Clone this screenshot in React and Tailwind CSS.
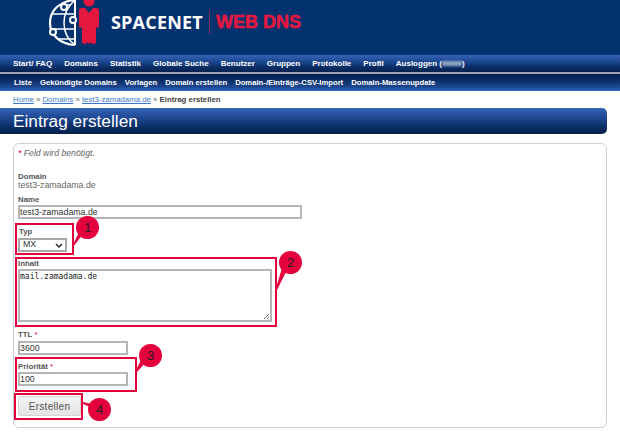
const nav1 = ["Start/ FAQ", "Domains", "Statistik", "Globale Suche", "Benutzer", "Gruppen", "Protokolle", "Profil"];
const nav2 = ["Liste", "Gekündigte Domains", "Vorlagen", "Domain erstellen", "Domain-/Einträge-CSV-Import", "Domain-Massenupdate"];
const barGrad = "bg-[linear-gradient(to_bottom,#3563b5_0%,#1f4a94_35%,#0b2f68_70%,#04204c_100%)]";

function Logo() {
  return (
    <svg width="60" height="48" viewBox="0 0 60 48" className="block" fill="none">
      <g stroke="#fff" strokeWidth="1.5">
        <path d="M35 1 C20 2 10 11 10 24 C10 36 20 45 35 46" strokeWidth="2.2" />
        <path d="M35 1 C27 8 24 16 24 24 C24 33 27 40 35 46" />
        <path d="M12 15 H35 M11 30 H35 M19 6 H31 M18 40 H35" />
        <path d="M35 1 V46" strokeWidth="2" />
        <circle cx="24" cy="8" r="3" fill="#03326f" strokeWidth="2" />
        <circle cx="33" cy="21" r="3" fill="#03326f" strokeWidth="2" />
        <circle cx="13" cy="33" r="3" fill="#03326f" strokeWidth="2" />
      </g>
      <g fill="#e5173f">
        <circle cx="49" cy="2" r="5.5" />
        <path d="M42 9 h3 l4 5 l4 -5 h3 a3 3 0 0 1 3 3 v15 a1.5 1.5 0 0 1 -3 0.5 v15 a2.5 2.5 0 0 1 -5 0 a2 2 0 0 1 -4 0 a2.5 2.5 0 0 1 -5 0 v-15 a1.5 1.5 0 0 1 -3 -0.5 v-15 a3 3 0 0 1 3 -3z" />
      </g>
    </svg>
  );
}

function Badge({ n, className, tail }) {
  return (
    <>
      <svg className="absolute left-0 top-0 pointer-events-none" width="620" height="435">
        <polygon points={tail} fill="#e4003c" />
      </svg>
      <div className={`absolute w-[23px] h-[23px] rounded-full bg-[#e4003c] flex items-center justify-center text-[13px] text-[#222] ${className}`}>{n}</div>
    </>
  );
}

function Label({ children, req }) {
  return (
    <div className="text-[7.8px] leading-[9px] font-bold text-[#555]">
      {children}
      {req && <span className="text-[#e4003c] font-normal"> *</span>}
    </div>
  );
}

const inputCls = "block border-2 border-[#b5b5b5] bg-white text-[8.8px] leading-[10px] text-[#333] px-0 outline-none";

export default function App() {
  return (
    <div className="relative w-[620px] h-[435px] overflow-hidden bg-white font-['Liberation_Sans',Arial,sans-serif]">
      <header className="h-[55px] bg-[#03326f] flex items-start pl-[40px] overflow-hidden">
        <div className="-mt-[1px]"><Logo /></div>
        <div className="flex items-center h-[43px] ml-[11px]">
          <span className="text-white text-[18px] font-bold tracking-[0.2px] font-['Open_Sans',sans-serif] leading-none">SPACENET</span>
          <span className="w-px h-[24px] bg-[#7a2d55] mx-[6px]" />
          <span className="text-[#e5173f] text-[18px] font-bold leading-none [-webkit-text-stroke:0.5px_#e5173f]">WEB DNS</span>
        </div>
      </header>

      <nav className={`h-[17px] ${barGrad} flex items-center pl-[13px] gap-[12px] text-white text-[8px] font-bold`}>
        {nav1.map((t) => <span key={t}>{t}</span>)}
        <span className="flex items-center">Ausloggen (<span className="inline-block w-[20px] h-[5px] bg-[#8fa3c4] blur-[1px]" />)</span>
      </nav>
      <div className="h-[2px] bg-[#9aa7b8]" />
      <nav className="h-[17px] bg-[linear-gradient(to_bottom,#04204c_0%,#0b2f68_40%,#1f4a94_80%,#2f66c4_100%)] flex items-center pl-[14px] gap-[8px] text-white text-[7.7px] font-bold">
        {nav2.map((t) => <span key={t}>{t}</span>)}
      </nav>

      <div className="h-[17px] pl-[13px] flex items-center text-[7.8px] text-[#666] whitespace-pre">
        <span className="text-[#3a78c9] underline">Home</span> » <span className="text-[#3a78c9] underline">Domains</span> » <span className="text-[#3a78c9] underline">test3-zamadama.de</span> » <span className="font-bold text-[#444]">Eintrag erstellen</span>
      </div>

      <div className={`h-[26px] w-[607px] rounded-r-[5px] ${barGrad} flex items-center pl-[13px] pt-[1px] text-white text-[17.3px]`}>Eintrag erstellen</div>

      <main className="ml-[13px] mt-[9px] w-[594px] h-[285px] border border-[#cfcfcf] rounded-[6px] pl-[4px] pt-[4px]">
        <p className="text-[8.7px] leading-[11px] italic text-[#666]"><span className="text-[#e4003c]">*</span> Feld wird benötigt.</p>

        <div className="mt-[13px]"><Label>Domain</Label></div>
        <div className="text-[8.8px] leading-[9px] text-[#666]">test3-zamadama.de</div>

        <div className="mt-[5px]"><Label>Name</Label></div>
        <input readOnly value="test3-zamadama.de" className={`${inputCls} mt-[1px] w-[284px] h-[14px]`} />

        <div className="mt-[8px] ml-[1px]"><Label>Typ</Label></div>
        <div className="mt-[2px] w-[49px] h-[14px] border-2 border-[#a8a8a8] flex items-center justify-between pl-[3px] pr-[2px] text-[8.8px] text-[#333]">
          <span>MX</span>
          <svg width="8" height="5" viewBox="0 0 8 5" fill="none"><path d="M1 1 L4 4 L7 1" stroke="#222" strokeWidth="1.4" /></svg>
        </div>

        <div className="mt-[7px]"><Label>Inhalt</Label></div>
        <div className="relative mt-[1px] w-[254px] h-[53px] border-2 border-[#b5b5b5] pt-[1px] font-['DejaVu_Sans_Mono',monospace] text-[8px] leading-[10px] text-[#222]">
          mail.zamadama.de
          <svg className="absolute right-0 bottom-0" width="7" height="7" viewBox="0 0 7 7"><path d="M1 6 L6 1 M4 6 L6 4" stroke="#555" strokeWidth="0.8" /></svg>
        </div>

        <div className="mt-[8px]"><Label req>TTL</Label></div>
        <input readOnly value="3600" className={`${inputCls} mt-[2px] w-[110px] h-[14px]`} />

        <div className="mt-[7px]"><Label req>Priorität</Label></div>
        <input readOnly value="100" className={`${inputCls} mt-[1px] w-[110px] h-[14px]`} />

        <div className="mt-[10px] w-[63px] h-[20px] pt-[1px] bg-[linear-gradient(to_bottom,#f4f4f4,#e4e4e4)] border border-[#d4d4d4] rounded-[2px] flex items-center justify-center text-[10px] text-[#555] tracking-[0.3px]">Erstellen</div>
      </main>

      <div className="absolute left-[15px] top-[223px] w-[59px] h-[32px] border-2 border-[#e4003c]" />
      <div className="absolute left-[15px] top-[257px] w-[262px] h-[70px] border-2 border-[#e4003c]" />
      <div className="absolute left-[15px] top-[357px] w-[122px] h-[35px] border-2 border-[#e4003c]" />
      <div className="absolute left-[14px] top-[393px] w-[69px] h-[27px] border-2 border-[#e4003c]" />

      <Badge n="1" className="left-[76px] top-[216px]" tail="73,245 73,247 83,234 79,232" />
      <Badge n="2" className="left-[279px] top-[251px]" tail="276,288 277,290 287,270 282,268" />
      <Badge n="3" className="left-[139px] top-[344px]" tail="136,370 137,372 146,362 141,360" />
      <Badge n="4" className="left-[88px] top-[398px]" tail="83,402 83,404 92,408 92,404" />
    </div>
  );
}
